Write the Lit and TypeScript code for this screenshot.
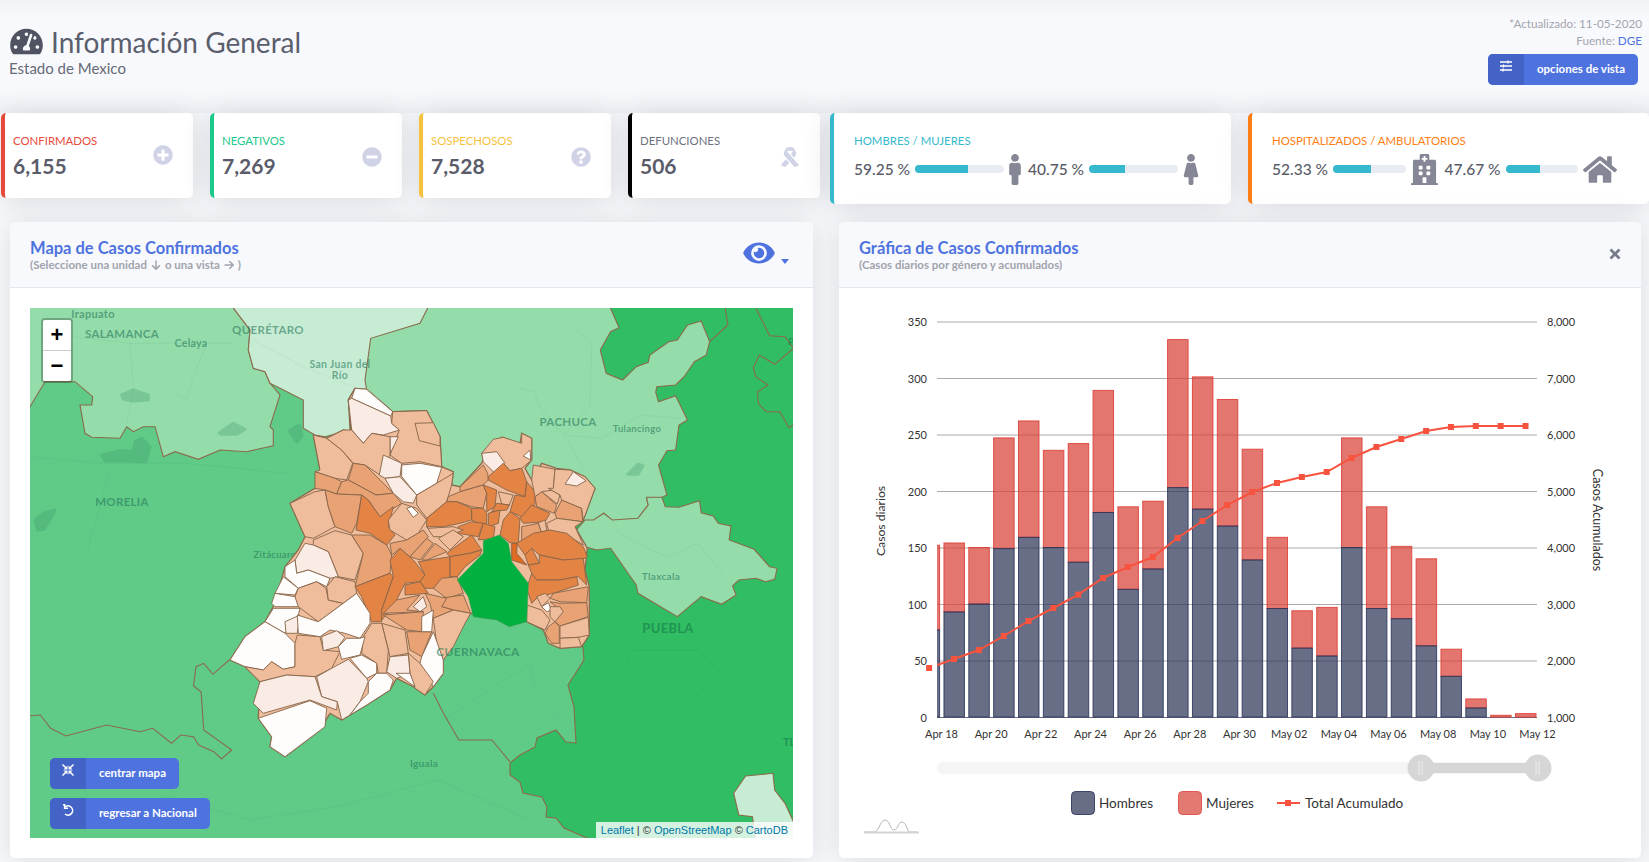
import { LitElement, html, svg, css } from "lit";
import { customElement } from "lit/decorators.js";

// the screenshot was traced in crops, so every shape keeps the crop it was read from
type Frame = [number, number, number, number];
const Z3: Frame = [20, 300, 1 / 3, 1 / 3];
const Z4: Frame = [220, 380, 1 / 3, 1 / 3];
const Z5: Frame = [20, 580, 1 / 1.96, 1 / 3];
const Z9: Frame = [520, 305, 1 / 2.925, 1 / 3];
const Z10: Frame = [520, 500, 1 / 2.925, 1 / 3];
const FULL: Frame = [0, 0, 1, 1];

const at = (f: Frame, pts: string) =>
  pts
    .trim()
    .split(/\s+/)
    .map((p) => {
      const [x, y] = p.split(",").map(Number);
      return `${(f[0] + x * f[2]).toFixed(1)},${(f[1] + y * f[3]).toFixed(1)}`;
    })
    .join(" ");

const W = "#fffdfb";
const P = "#faece4";
const L = "#efbd9b";
const M = "#e8a274";
const D = "#e38445";
const X = "#e06a22";

const OUTLINE =
  "405,25 440,28 518,95 620,92 660,170 665,260 700,275 695,315 720,320 785,250 800,215 845,172 900,190 905,160 935,175 935,240 915,265 935,300 965,250 1010,265 1050,270 1095,290 1125,325 1090,420 1065,440 1102,505 1095,570 1108,620 1108,765 1085,800 1020,805 985,790 970,750 920,725 750,700 700,785 670,840 670,880 640,920 615,945 580,920 530,895 510,930 440,975 390,1005 365,1020 330,1000 300,1050 215,1115 195,1130 150,1100 155,1070 115,1015 120,905 75,860 30,840 75,770 135,725 165,670 195,560 235,510 255,470 210,370 285,325 300,270 280,165 320,175 370,150 395,155 385,60";

const CELLS: [string, string][] = [
  [W, "405,25 440,28 518,95 512,108 395,55"],
  [P, "395,55 512,108 515,130 538,150 490,165 455,160 430,190 395,150 385,60"],
  [L, "518,95 620,92 660,170 665,260 600,245 545,250 510,225 538,150 515,130"],
  [L, "585,130 640,128 660,170 660,198 598,182"],
  [P, "510,170 535,170 510,222"],
  [L, "280,165 320,175 365,210 398,250 380,300 345,295 285,275 300,270"],
  [L, "320,175 370,150 395,150 430,190 455,160 510,170 510,225 480,285 435,255 400,250 365,210"],
  [M, "400,250 435,255 520,340 468,345 385,300"],
  [M, "285,275 345,295 365,305 350,342 315,330 285,325"],
  [M, "365,305 385,300 468,345 520,340 545,370 480,410 445,360 425,345 350,342"],
  [P, "490,225 545,250 540,290 495,295 478,285"],
  [W, "545,255 600,250 665,262 650,310 590,345 545,290"],
  [P, "495,295 540,290 590,345 580,370 550,365 520,340"],
  [L, "210,370 285,335 315,330 325,380 345,440 280,475 255,470"],
  [M, "315,330 350,342 425,345 410,430 395,460 345,440 325,380"],
  [D, "425,345 445,360 480,410 520,380 505,440 525,465 500,495 450,460 408,450"],
  [L, "650,310 700,280 695,315 680,365 620,415 590,375 590,345"],
  [L, "545,370 590,385 620,420 595,460 560,480 510,450 505,420"],
  [W, "560,385 575,380 595,400 580,412"],
  [L, "280,480 345,452 395,465 430,520 405,600 355,590 325,515 280,495"],
  [P, "255,490 280,495 325,515 355,590 330,595 265,570 230,580 225,540"],
  [W, "195,560 225,540 230,580 265,570 330,595 320,620 290,605 235,625 195,590"],
  [W, "190,590 235,625 225,645 165,640"],
  [W, "165,640 225,650 240,680 165,680 155,670"],
  [W, "160,685 240,685 235,705 195,760 135,725"],
  [P, "195,725 240,705 232,760 198,760"],
  [L, "235,625 290,605 318,625 325,660 370,670 295,725 235,680 225,650"],
  [L, "320,620 345,590 405,605 410,640 370,670 325,660"],
  [M, "395,465 450,465 500,495 515,525 510,580 405,620 430,520"],
  [D, "405,620 510,580 520,590 485,690 485,725 455,725 425,650"],
  [D, "510,540 540,505 580,540 615,585 600,605 555,610 520,680 485,720 485,690 520,590"],
  [D, "595,545 690,530 690,590 640,625 615,625 600,605 615,585"],
  [D, "555,615 600,605 625,640 555,645"],
  [L, "785,220 820,178 850,172 905,190 905,160 935,175 935,240 905,265 870,272 850,250 838,290 790,240"],
  [P, "785,220 830,215 855,250 835,290 790,245"],
  [W, "910,228 930,210 932,240"],
  [M, "720,320 790,255 803,280 805,300 790,315 720,335"],
  [D, "805,290 850,250 870,272 905,265 920,305 915,350 860,330 805,300"],
  [D, "920,305 945,335 945,375 905,410 870,395 885,345 915,350"],
  [M, "685,350 720,335 790,315 800,340 790,385 755,380 710,365 680,365"],
  [D, "620,415 680,365 710,365 755,385 755,420 720,430 670,440 620,440"],
  [D, "755,385 790,385 800,400 800,430 785,435 755,420"],
  [D, "790,315 830,330 825,380 800,395 800,340"],
  [L, "835,335 880,345 868,375 845,372"],
  [D, "830,370 868,375 860,390 815,395"],
  [D, "805,400 840,390 835,430 805,440"],
  [D, "755,425 790,430 775,470 715,460 715,440"],
  [D, "790,430 825,440 820,475 775,480"],
  [D, "870,395 900,415 895,490 870,488 840,465 850,420"],
  [D, "935,375 990,400 975,425 910,430 900,415"],
  [M, "945,350 965,335 1010,375 1003,400 950,380"],
  [L, "965,335 985,325 1020,345 1012,372"],
  [M, "1005,400 1025,360 1085,385 1088,425 1010,415"],
  [L, "940,255 1005,268 1000,330 965,335 945,350 935,300"],
  [L, "1005,268 1050,270 1095,290 1125,325 1090,420 1085,385 1025,360 1020,345 985,325 1000,325"],
  [P, "1035,312 1060,275 1098,302 1070,318"],
  [L, "980,430 1010,415 1088,425 1065,440 1090,495 1040,465 985,450"],
  [M, "905,440 955,430 965,460 905,485"],
  [L, "955,428 975,420 980,450 965,460"],
  [D, "890,490 940,460 990,450 1040,460 1090,500 1102,530 1085,540 1030,540 958,525 935,505 915,525"],
  [D, "915,525 935,505 958,550 925,555"],
  [X, "875,490 892,490 890,520 920,555 875,540"],
  [D, "958,525 1030,540 1090,535 1100,615 1075,590 1020,600 950,600 935,580 925,555 958,550"],
  [D, "935,580 950,600 1020,600 1070,590 1075,615 1000,640 955,650 935,670 920,625"],
  [M, "1000,640 1105,620 1100,668 1020,665 990,655"],
  [M, "990,665 1020,670 1100,668 1105,710 1020,738 1005,725 1020,690"],
  [L, "1020,738 1105,712 1108,765 1075,772 1020,775"],
  [L, "1020,775 1075,772 1085,800 1020,805"],
  [M, "985,740 1005,725 1018,740 1018,790 995,790 975,760"],
  [L, "950,650 975,640 990,655 965,680"],
  [W, "965,680 985,668 995,690 980,695"],
  [L, "920,675 965,690 990,720 975,750 920,725"],
  [L, "990,680 1020,680 1030,695 1005,725 990,710"],
  [M, "510,490 560,480 610,450 625,470 570,530 540,505 515,525"],
  [L, "625,445 700,440 730,450 680,470 640,470 620,440"],
  [L, "655,475 700,450 730,470 690,510"],
  [M, "570,530 620,475 640,490 600,540"],
  [M, "605,540 645,490 680,515 620,540"],
  [D, "680,520 755,465 785,510 750,520 690,530"],
  [D, "690,530 750,520 785,510 780,525 735,560 712,590 690,590"],
  [M, "640,625 665,595 712,590 730,640 680,655 660,640"],
  [M, "660,655 730,645 752,700 700,690 665,680"],
  [M, "615,640 680,655 665,680 700,690 640,715 630,670"],
  [M, "490,700 530,660 600,645 560,690 610,695"],
  [M, "490,705 610,695 605,755 560,750"],
  [L, "640,715 700,690 752,700 735,730 700,800 670,840 650,790"],
  [L, "485,730 555,750 565,820 510,830"],
  [L, "430,770 455,730 485,730 505,810 500,880 475,880 470,850 425,820"],
  [M, "560,755 635,755 605,830 570,810"],
  [W, "605,830 640,755 670,840 670,880 640,920 600,850"],
  [L, "565,820 600,850 640,905 615,945 585,925 570,880"],
  [P, "510,830 565,825 570,880 530,895 500,875"],
  [W, "528,880 570,880 585,920"],
  [W, "605,710 640,690 635,755 605,755"],
  [P, "580,680 610,650 620,680 600,695"],
  [W, "30,840 75,770 135,725 195,760 225,790 225,860 190,868 155,845 130,870 75,860"],
  [L, "75,860 130,870 155,845 190,868 225,860 225,790 232,765 300,770 310,810 360,815 335,865 285,890 200,885 120,905"],
  [W, "232,705 295,725 370,670 410,640 450,700 450,730 420,775 375,760 330,750 300,770 235,760"],
  [P, "305,770 350,752 375,772 355,800 310,812"],
  [W, "355,800 380,775 420,775 435,770 420,825 365,838"],
  [W, "390,835 425,825 470,850 470,880 440,895"],
  [P, "290,890 335,865 385,838 440,895 445,905 420,965 390,1005 365,1020 352,965 305,950"],
  [W, "445,905 470,880 500,880 520,900 510,930 440,975 390,1005 420,965 445,940"],
  [P, "120,905 200,885 285,890 305,950 352,965 350,990 270,960 130,1000 100,970"],
  [W, "115,1015 270,962 320,985 315,1040 215,1115 195,1130 150,1100 155,1070"],
];

const STATES: [string, Frame, string][] = [
  [
    "#5fcb87",
    FULL,
    "20,298 350,298 350,440 480,600 575,640 583,647 584,660 568,685 574,707 576,743 566,742 556,730 537,738 535,747 520,755 510,763 510,775 520,782 523,793 542,797 547,807 546,817 556,818 564,828 587,838 600,848 20,848",
  ],
  [
    "#94dcaa",
    Z9,
    "-491,-20 265,-20 265,10 290,68 265,80 235,135 252,205 300,225 340,185 375,172 380,150 435,110 460,105 490,60 530,48 555,110 545,150 510,170 480,215 455,240 400,245 397,262 405,290 455,272 490,345 465,360 455,435 430,437 405,480 430,570 412,578 370,578 375,600 345,640 270,648 245,625 215,647 185,647 0,700 -491,400",
  ],
  [
    "#94dcaa",
    Z10,
    "370,-8 415,-8 425,20 465,22 525,2 530,38 565,48 580,70 617,78 612,120 685,148 730,200 752,205 745,238 718,245 690,235 640,240 622,258 632,285 590,313 530,290 460,350 345,280 340,255 265,145 225,150 195,142 165,90 190,60 215,60 245,40 270,60 345,55 375,15",
  ],
  [
    "#94dcaa",
    Z3,
    "-10,0 632,0 640,24 690,90 685,150 700,205 735,215 750,250 780,285 750,380 760,390 760,437 680,455 600,450 535,478 465,455 430,470 405,380 370,380 340,395 320,380 300,415 215,412 195,400 180,315 215,315 218,290 165,245 75,245 30,320 -10,385",
  ],
  [
    "#c7ecd4",
    Z3,
    "632,0 640,24 690,90 685,150 700,205 735,215 750,250 780,265 850,300 850,385 885,405 915,410 990,390 985,300 1005,265 1040,270 1035,240 1052,115 1200,70 1235,0",
  ],
  ["#c7ecd4", Z10, "660,828 740,820 745,870 775,910 800,965 810,1040 690,1040 680,950 640,945 625,880"],
];

const BORDERS: [Frame, string][] = [
  [Z9, "690,10 730,92 775,95 800,130 745,178 700,150 682,188 690,215 725,240 695,260 697,295 720,320 760,320 787,368 840,330"],
  [Z5, "-5,410 40,405 60,445 90,468 170,435 235,455 260,445 297,490 315,465 340,470 350,495 380,515 395,537 415,510 360,450 355,335 340,318 345,260 360,250 378,283 410,240"],
  [Z5, "810,340 830,400 860,480 925,480 960,545"],
  [Z9, "598,-5 608,60 555,110"],
];

const ROADS: [Frame, string][] = [
  [Z3, "160,110 330,130 470,130 640,130"],
  [Z3, "330,130 340,260 320,370"],
  [Z3, "460,280 500,300 520,230 560,130"],
  [Z3, "700,120 850,200 1000,260"],
  [Z3, "30,470 240,490 500,490 800,520"],
  [Z3, "270,500 240,620 200,760"],
  [Z9, "0,250 40,260 60,310 130,390 240,400 350,330 470,340"],
  [Z9, "150,60 210,120 205,300 130,390 190,500"],
  [Z10, "280,90 340,130 430,170 520,130 600,230"],
  [Z10, "300,510 330,450 520,450 590,520 500,600 330,760"],
  [Z5, "60,700 300,650 450,720 620,680 820,600 1000,720"],
  [Z5, "830,420 900,350 1000,250 1010,330 1060,420"],
];

const LAKES: [Frame, string][] = [
  [Z3, "305,285 340,270 385,285 385,300 340,303 310,298"],
  [Z3, "245,465 300,452 340,455 345,425 365,415 390,440 378,485 300,482 255,483"],
  [Z3, "45,660 70,640 105,630 95,650 72,688 52,690"],
  [Z3, "598,398 640,370 675,388 650,403 602,403"],
  [Z3, "808,392 838,375 846,408 830,426"],
  [Z9, "315,508 345,478 360,482 345,508"],
];

const LABELS: [string, number, number, number][] = [
  ["Irapuato", 93, 318, 11],
  ["SALAMANCA", 122, 338, 11.5],
  ["Celaya", 191, 347, 10.5],
  ["QUERÉTARO", 268, 334, 11.5],
  ["San Juan del", 340, 368, 10.5],
  ["Río", 340, 379, 10.5],
  ["MORELIA", 122, 506, 11.5],
  ["Zitácuaro", 275, 558, 9.5],
  ["PACHUCA", 568, 426, 11.5],
  ["Tulancingo", 637, 432, 9.5],
  ["Tlaxcala", 661, 580, 10],
  ["Iguala", 424, 767, 10],
];

const CDMX = "790,482 838,465 865,490 875,545 925,610 920,725 868,740 830,720 760,710 745,650 712,600 790,520";

// hombres, total por barra
const BARS: [number, number][] = [
  [77, 152], [93, 154], [100, 150], [149, 247], [159, 262], [150, 236], [137, 242], [181, 289], [113, 186],
  [131, 191], [203, 334], [184, 301], [169, 281], [139, 237], [96, 159], [61, 94], [54, 97], [150, 247],
  [96, 186], [87, 151], [63, 140], [36, 60], [8, 16], [0, 1.5], [0, 3],
];
const LINE_Y = [
  668, 659, 650, 636, 621, 608, 594.6, 578, 567, 557, 538, 521, 505, 492, 483, 477, 472, 458, 447, 439, 431, 427, 426, 426, 426,
];
const DATES = ["Apr 18", "Apr 20", "Apr 22", "Apr 24", "Apr 26", "Apr 28", "Apr 30", "May 02", "May 04", "May 06", "May 08", "May 10", "May 12"];
const barX = (i: number) => 929.1 + 24.85 * i;
const valY = (v: number) => 717 - v * 1.13;

const ICONS: Record<string, [string, string]> = {
  plus: ["0 0 512 512", "M256 8C119 8 8 119 8 256s111 248 248 248 248-111 248-248S393 8 256 8zm144 276c0 6.6-5.4 12-12 12h-92v92c0 6.6-5.4 12-12 12h-56c-6.6 0-12-5.4-12-12v-92h-92c-6.6 0-12-5.4-12-12v-56c0-6.6 5.4-12 12-12h92v-92c0-6.6 5.4-12 12-12h56c6.6 0 12 5.4 12 12v92h92c6.6 0 12 5.4 12 12v56z"],
  minus: ["0 0 512 512", "M256 8C119 8 8 119 8 256s111 248 248 248 248-111 248-248S393 8 256 8zM124 296c-6.6 0-12-5.4-12-12v-56c0-6.6 5.4-12 12-12h264c6.6 0 12 5.4 12 12v56c0 6.6-5.4 12-12 12H124z"],
  question: ["0 0 512 512", "M504 256c0 136.997-111.043 248-248 248S8 392.997 8 256C8 119.083 119.043 8 256 8s248 111.083 248 248zM262.655 90c-54.497 0-89.255 22.957-116.549 63.758-3.536 5.286-2.353 12.415 2.715 16.258l34.699 26.31c5.205 3.947 12.621 3.008 16.665-2.122 17.864-22.658 30.113-35.797 57.303-35.797 20.429 0 45.698 13.148 45.698 32.958 0 14.976-12.363 22.667-32.534 33.976C247.128 238.528 216 254.941 216 296v4c0 6.627 5.373 12 12 12h56c6.627 0 12-5.373 12-12v-1.333c0-28.462 83.186-29.647 83.186-106.667 0-58.002-60.165-102-116.531-102zM256 338c-25.365 0-46 20.635-46 46 0 25.364 20.635 46 46 46s46-20.636 46-46c0-25.365-20.635-46-46-46z"],
  ribbon: ["0 0 448 512", "M6.1 444.3c-9.6 10.8-7.5 27.6 4.5 35.7l68.8 27.9c9.9 6.7 23.3 5 31.3-3.8l91.8-101.9-79.2-87.9-117.2 130zm435.8 0s-292-324.6-295.4-330.1c15.4-8.4 40.2-17.9 77.5-17.9s62.1 9.5 77.5 17.9c-3.3 5.6-56.1 64.6-56.1 64.6l79.1 87.7 34.2-38c28.7-31.9 33.3-78.6 11.4-115.5l-43.7-73.5c-4.3-7.2-9.9-13.3-16.8-18-40.7-27.6-127.4-29.7-171.4 0-6.9 4.7-12.5 10.8-16.8 18l-43.6 73.2c-1.5 2.5-37.1 62.2 11.5 116L337.5 504c8 8.9 21.4 10.5 31.3 3.8l68.8-27.9c11.9-8 14-24.8 4.3-35.6z"],
  male: ["0 0 192 512", "M96 0c35.346 0 64 28.654 64 64s-28.654 64-64 64-64-28.654-64-64S60.654 0 96 0m48 144h-11.36c-22.711 10.443-49.59 10.894-73.28 0H48c-26.51 0-48 21.49-48 48v136c0 13.255 10.745 24 24 24h16v136c0 13.255 10.745 24 24 24h64c13.255 0 24-10.745 24-24V352h16c13.255 0 24-10.745 24-24V192c0-26.51-21.49-48-48-48z"],
  female: ["0 0 256 512", "M128 0c35.346 0 64 28.654 64 64s-28.654 64-64 64c-35.346 0-64-28.654-64-64S92.654 0 128 0m119.283 354.179l-48-192A24 24 0 0 0 176 144h-11.36c-22.711 10.443-49.59 10.894-73.28 0H80a24 24 0 0 0-23.283 18.179l-48 192C4.935 369.305 16.383 384 32 384h56v104c0 13.255 10.745 24 24 24h32c13.255 0 24-10.745 24-24V384h56c15.591 0 27.071-14.671 23.283-29.821z"],
  hospital: ["0 0 448 512", "M448 492v20H0v-20c0-6.627 5.373-12 12-12h20V120c0-13.255 10.745-24 24-24h88V24c0-13.255 10.745-24 24-24h112c13.255 0 24 10.745 24 24v72h88c13.255 0 24 10.745 24 24v360h20c6.627 0 12 5.373 12 12zM308 192h-40c-6.627 0-12 5.373-12 12v40c0 6.627 5.373 12 12 12h40c6.627 0 12-5.373 12-12v-40c0-6.627-5.373-12-12-12zm-168 64h40c6.627 0 12-5.373 12-12v-40c0-6.627-5.373-12-12-12h-40c-6.627 0-12 5.373-12 12v40c0 6.627 5.373 12 12 12zm104 128h-40c-6.627 0-12 5.373-12 12v84h64v-84c0-6.627-5.373-12-12-12zm64-96h-40c-6.627 0-12 5.373-12 12v40c0 6.627 5.373 12 12 12h40c6.627 0 12-5.373 12-12v-40c0-6.627-5.373-12-12-12zm-116 12c0-6.627-5.373-12-12-12h-40c-6.627 0-12 5.373-12 12v40c0 6.627 5.373 12 12 12h40c6.627 0 12-5.373 12-12v-40zM182 96h26v26a6 6 0 0 0 6 6h20a6 6 0 0 0 6-6V96h26a6 6 0 0 0 6-6V70a6 6 0 0 0-6-6h-26V38a6 6 0 0 0-6-6h-20a6 6 0 0 0-6 6v26h-26a6 6 0 0 0-6 6v20a6 6 0 0 0 6 6z"],
  home: ["0 0 576 512", "M280.37 148.26L96 300.11V464a16 16 0 0 0 16 16l112.06-.29a16 16 0 0 0 15.92-16V368a16 16 0 0 1 16-16h64a16 16 0 0 1 16 16v95.64a16 16 0 0 0 16 16.05L464 480a16 16 0 0 0 16-16V300L295.67 148.26a12.19 12.19 0 0 0-15.3 0zM571.6 251.47L488 182.56V44.05a12 12 0 0 0-12-12h-56a12 12 0 0 0-12 12v72.61L318.47 43a48 48 0 0 0-61 0L4.34 251.47a12 12 0 0 0-1.6 16.9l25.5 31A12 12 0 0 0 45.15 301l235.22-193.74a12.19 12.19 0 0 1 15.3 0L530.9 301a12 12 0 0 0 16.9-1.6l25.5-31a12 12 0 0 0-1.7-16.93z"],
  gauge: ["0 0 576 512", "M288 32C128.94 32 0 160.94 0 320c0 52.8 14.25 102.26 39.06 144.8 5.61 9.62 16.3 15.2 27.44 15.2h443c11.14 0 21.83-5.58 27.44-15.2C561.75 422.26 576 372.8 576 320c0-159.06-128.94-288-288-288zm0 64c14.71 0 26.58 10.13 30.32 23.65-1.11 2.26-2.64 4.23-3.45 6.67l-9.22 27.67c-5.13 3.49-10.97 6.01-17.64 6.01-17.67 0-32-14.33-32-32S270.33 96 288 96zM96 384c-17.67 0-32-14.33-32-32s14.33-32 32-32 32 14.33 32 32-14.33 32-32 32zm48-160c-17.67 0-32-14.33-32-32s14.33-32 32-32 32 14.33 32 32-14.33 32-32 32zm246.77-72.41l-61.33 184C343.13 347.33 352 364.54 352 384c0 11.72-3.38 22.55-8.88 32H232.88c-5.5-9.45-8.88-20.28-8.88-32 0-33.94 26.5-61.43 59.9-63.59l61.34-184.01c4.17-12.56 17.73-19.45 30.36-15.17 12.57 4.19 19.35 17.79 15.17 30.36zm14.66 57.2l15.52-46.55c3.47-1.29 7.13-2.23 11.05-2.23 17.67 0 32 14.33 32 32s-14.33 32-32 32c-11.38-.01-20.89-6.28-26.57-15.22zM480 384c-17.67 0-32-14.33-32-32s14.33-32 32-32 32 14.33 32 32-14.33 32-32 32z"],
  eye: ["0 0 576 512", "M572.52 241.4C518.29 135.59 410.93 64 288 64S57.68 135.64 3.48 241.41a32.35 32.35 0 0 0 0 29.19C57.71 376.41 165.07 448 288 448s230.32-71.64 284.52-177.41a32.35 32.35 0 0 0 0-29.19zM288 400a144 144 0 1 1 144-144 143.93 143.93 0 0 1-144 144zm0-240a95.31 95.31 0 0 0-25.31 3.79 47.85 47.85 0 0 1-66.9 66.9A95.78 95.78 0 1 0 288 160z"],
};

const icon = (name: string, cls: string) => html`<svg class=${cls} viewBox=${ICONS[name][0]}><path d=${ICONS[name][1]} fill="currentColor"></path></svg>`;

const slidersIcon = html`<svg class="btn-ico" viewBox="0 0 12 12">
  <path d="M0 2h12M0 6h12M0 10h12M8 .5v3M3.500 4.500v3M3 8.500v3" stroke="#fff" stroke-width="1.300" fill="none"></path>
</svg>`;
const compressIcon = html`<svg class="btn-ico" viewBox="0 0 12 12">
  <path d="M.5 .5L4.500 4.500M11.500 .5L7.500 4.500M.5 11.500L4.500 7.500M11.500 11.500L7.500 7.500" stroke="#fff" stroke-width="1.500"></path>
  <path d="M1.500 5.500h4v-4zM10.500 5.500h-4v-4zM1.500 6.500h4v4zM10.500 6.500h-4v4z" fill="#fff"></path>
</svg>`;
const undoIcon = html`<svg class="btn-ico" viewBox="0 0 12 12">
  <path d="M2.800 3.200A4.600 4.600 0 1 1 3 10" stroke="#fff" stroke-width="1.600" fill="none"></path>
  <path d="M1 .8h1.600v3.400h3.400" stroke="#fff" stroke-width="1.500" fill="none"></path>
</svg>`;
const arrowDown = html`<svg class="arrow" viewBox="0 0 10 10"><path d="M5 .5v8.500M1.200 5.400L5 9.200l3.800-3.800" fill="none" stroke="currentColor" stroke-width="1.500"></path></svg>`;
const arrowRight = html`<svg class="arrow" viewBox="0 0 10 10"><path d="M.5 5h8.500M5.400 1.200L9.200 5 5.400 8.800" fill="none" stroke="currentColor" stroke-width="1.500"></path></svg>`;

@customElement("app-root")
export class AppRoot extends LitElement {
  static styles = css`
    :host {
      display: block;
      width: 1649px;
      height: 862px;
      overflow: hidden;
      background: #f8f9fc;
      font-family: "Lato", "Open Sans", sans-serif;
      color: #5a5c69;
    }
    .head {
      height: 113px;
      box-sizing: border-box;
      padding: 27px 7px 0 9px;
      display: flex;
      justify-content: space-between;
      align-items: flex-start;
      background: linear-gradient(#f2f3f7, #f8f9fc 18px, #f8f9fc 90px, #f1f2f6);
    }
    .title {
      display: flex;
      align-items: center;
      gap: 8px;
      font-size: 28px;
      font-weight: 400;
      line-height: 28px;
      padding-left: 1px;
      color: #5b5e6c;
    }
    .gauge {
      width: 33px;
      height: 29px;
      color: #505362;
    }
    .sub {
      font-size: 15px;
      line-height: 20px;
      margin-top: 2px;
      color: #666977;
    }
    .meta {
      margin-top: -12px;
      display: flex;
      flex-direction: column;
      align-items: flex-end;
      font-size: 11.700px;
      line-height: 17px;
      color: #a3a5ae;
    }
    .meta b {
      font-weight: 400;
      color: #4e73df;
    }
    .meta .btn {
      margin: 5px 4px 0 0;
    }
    .btn {
      display: flex;
      align-items: stretch;
      height: 31px;
      border-radius: 5px;
      overflow: hidden;
      background: #4e73df;
      color: #fff;
      font-size: 11.500px;
      font-weight: 700;
      line-height: 30px;
    }
    .btn i {
      width: 36px;
      display: flex;
      justify-content: center;
      padding-top: 6px;
      box-sizing: border-box;
      background: #4463c6;
    }
    .btn span {
      padding: 0 13px;
    }
    .btn-ico {
      width: 12px;
      height: 12px;
    }
    .stats {
      display: flex;
      align-items: flex-start;
      gap: 17px;
      padding-left: 1px;
      height: 109px;
    }
    .card {
      flex: none;
      box-sizing: border-box;
      background: #fff;
      border-radius: 5px;
      border-left: 4px solid;
      box-shadow: 0 2px 28px rgba(58, 59, 69, 0.16);
    }
    .small {
      width: 192px;
      height: 85px;
      padding: 21px 0 0 8px;
      display: flex;
      justify-content: space-between;
    }
    .wide {
      width: 401px;
      height: 91px;
      padding: 21px 32px 0 20px;
    }
    .wide.first {
      margin-left: -7px;
    }
    .label {
      font-size: 11.400px;
      line-height: 14px;
    }
    .value {
      font-size: 21px;
      font-weight: 700;
      line-height: 26px;
      margin-top: 5px;
      color: #5a5c69;
    }
    .stat-ico {
      width: 20px;
      height: 20px;
      margin: 13px 20px 0 0;
      color: #d0d3e6;
    }
    .small:first-child .stat-ico {
      margin-top: 11px;
    }
    .shares {
      display: flex;
      align-items: center;
      margin-top: 5px;
      height: 32px;
    }
    .pct {
      font-size: 15.500px;
      font-weight: 500;
      width: 61px;
      flex: none;
      white-space: nowrap;
    }
    .bar {
      flex: 1;
      height: 8px;
      border-radius: 4px;
      overflow: hidden;
      background: #eaecf4;
    }
    .bar div {
      height: 100%;
      background: #36b9cc;
    }
    .share-ico {
      flex: none;
      height: 31px;
      margin: 0 7px 0 5px;
      color: #858796;
    }
    .share-ico:last-child {
      margin-right: 0;
    }
    .i-male {
      width: 12px;
    }
    .i-female {
      width: 16px;
    }
    .i-hospital {
      width: 27px;
    }
    .i-home {
      width: 34px;
    }
    .panels {
      display: flex;
      gap: 26px;
      padding-left: 10px;
    }
    .panel {
      flex: none;
      height: 636px;
      box-sizing: border-box;
      background: #fff;
      border-radius: 5px;
      overflow: hidden;
      box-shadow: 0 2px 28px rgba(58, 59, 69, 0.15);
      display: flex;
      flex-direction: column;
    }
    .p-map {
      width: 803px;
    }
    .p-chart {
      width: 802px;
    }
    .p-head {
      height: 66px;
      flex: none;
      box-sizing: border-box;
      padding: 17px 20px 0;
      background: #f8f9fc;
      border-bottom: 1px solid #e3e6f0;
      display: flex;
      justify-content: space-between;
    }
    .p-title {
      font-size: 16.500px;
      font-weight: 700;
      line-height: 18px;
      color: #4e73df;
    }
    .p-sub {
      display: flex;
      align-items: center;
      font-size: 11.500px;
      font-weight: 700;
      line-height: 14px;
      margin-top: 1px;
      white-space: pre;
      color: #a1a3ad;
    }
    .arrow {
      width: 10px;
      height: 10px;
      margin: 0 4px;
    }
    .eye {
      display: flex;
      align-items: flex-end;
      gap: 5px;
      color: #4e73df;
      height: 30px;
      padding: 0 4px 0 0;
    }
    .eye svg {
      width: 34px;
      height: 28px;
      margin-bottom: 2px;
    }
    .eye i {
      width: 0;
      height: 0;
      margin-bottom: 5px;
      border: 4px solid transparent;
      border-top: 5px solid #4e73df;
      border-bottom: 0;
    }
    .close {
      width: 12px;
      height: 12px;
      margin: 9px 0 0 0;
    }
    .map-wrap {
      position: relative;
      margin: 20px 20px 0;
      width: 763px;
      height: 530px;
      overflow: hidden;
      background: #30bd63;
    }
    .map-wrap > svg,
    .chart {
      display: block;
      width: 100%;
      height: 100%;
    }
    .zoom {
      position: absolute;
      left: 11px;
      top: 10px;
      width: 32px;
      border: 2px solid rgba(0, 0, 0, 0.25);
      border-radius: 4px;
      background-clip: padding-box;
      font: 700 22px/30px "Liberation Sans", sans-serif;
      color: #000;
      text-align: center;
      box-sizing: border-box;
    }
    .zoom div {
      height: 30px;
      background: #fff;
    }
    .zoom div:first-child {
      border-bottom: 1px solid #ccc;
      border-radius: 2px 2px 0 0;
    }
    .zoom div:last-child {
      border-radius: 0 0 2px 2px;
    }
    .map-btns {
      position: absolute;
      left: 20px;
      bottom: 9px;
      display: flex;
      flex-direction: column;
      align-items: flex-start;
      gap: 9px;
    }
    .attr {
      position: absolute;
      right: 0;
      bottom: 0;
      height: 16px;
      padding: 0 5px;
      background: rgba(255, 255, 255, 0.8);
      font: 11px/16px "Liberation Sans", sans-serif;
      color: #333;
    }
    .attr b {
      font-weight: 400;
      color: #0078a8;
    }
    .chart-body {
      flex: 1;
      min-height: 0;
    }
    text {
      font-family: "Lato", "Open Sans", sans-serif;
    }
  `;

  renderMap() {
    return html`<svg viewBox="30 308 763 530" preserveAspectRatio="none">
      <rect x="20" y="298" width="790" height="560" fill="#30bd63"></rect>
      ${STATES.map(([fill, f, pts]) => svg`<polygon points=${at(f, pts)} fill=${fill} stroke="#8a6b4c" stroke-width="1.100"></polygon>`)}
      ${BORDERS.map(([f, pts]) => svg`<polyline points=${at(f, pts)} fill="none" stroke="#8a6b4c" stroke-width="1.100"></polyline>`)}
      ${ROADS.map(([f, pts]) => svg`<polyline points=${at(f, pts)} fill="none" stroke="rgba(40,110,80,.07)" stroke-width="1"></polyline>`)}
      ${LAKES.map(([f, pts]) => svg`<polygon points=${at(f, pts)} fill="#3c9669" stroke="#3c9669" stroke-width="3" stroke-linejoin="round" opacity=".3"></polygon>`)}
      ${LABELS.map(
        ([t, x, y, size]) =>
          svg`<text x=${x} y=${y} text-anchor="middle" font-size=${size} font-weight="700" letter-spacing=".3" fill="rgba(40,120,90,.6)">${t}</text>`
      )}
      <text x="668" y="633" text-anchor="middle" font-size="13" font-weight="700" letter-spacing=".3" fill="rgba(20,120,70,.6)">PUEBLA</text>
      <text x="788" y="345" font-size="10" font-weight="700" fill="rgba(20,120,70,.6)">Po</text>
      <text x="783" y="746" font-size="11" font-weight="700" fill="rgba(20,120,70,.6)">TL</text>
      <polygon points=${at(Z4, OUTLINE)} fill=${L} stroke="#8a6b4c" stroke-width="1.300"></polygon>
      ${CELLS.map(([fill, pts]) => svg`<polygon points=${at(Z4, pts)} fill=${fill} stroke="#86644a" stroke-width=".9" stroke-linejoin="round"></polygon>`)}
      <polygon points=${at(Z4, CDMX)} fill="#00b140" stroke="#3f9a55" stroke-width=".6"></polygon>
      <text x="478" y="656" text-anchor="middle" font-size="12" font-weight="700" letter-spacing=".3" fill="rgba(40,120,90,.6)">CUERNAVACA</text>
    </svg>`;
  }

  renderChart() {
    const grid = [350, 300, 250, 200, 150, 100, 50, 0];
    const line = LINE_Y.map((y, i) => `${barX(i)},${y}`).join(" ");
    return html`<svg class="chart" viewBox="839 288 802 570" preserveAspectRatio="none">
      <defs>
        <clipPath id="plot"><rect x="937" y="300" width="600" height="420"></rect></clipPath>
      </defs>
      ${grid.map((v, i) => {
        const y = valY(v) + 0.5;
        return svg`
          <line x1="937" x2="1537" y1=${y} y2=${y} stroke=${v === 0 ? "#666a80" : "#aaa"} stroke-width="1"></line>
          <text x="927" y=${y + 4} text-anchor="end" font-size="11" fill="#333">${v}</text>
          <text x="1547" y=${y + 4} font-size="11" fill="#333">${(8 - i).toString()},000</text>`;
      })}
      <g clip-path="url(#plot)">
        ${BARS.map(([m, t], i) => {
          const x = barX(i) - 10;
          return svg`
            <rect x=${x} y=${valY(t)} width="20.500" height=${valY(m) - valY(t)} fill="rgba(216,66,56,.72)" stroke="rgba(221,60,52,.85)" stroke-width="1"></rect>
            ${m ? svg`<rect x=${x} y=${valY(m)} width="20.500" height=${717 - valY(m)} fill="rgba(47,56,88,.73)" stroke="rgba(43,52,90,.85)" stroke-width="1"></rect>` : ""}`;
        })}
        <polyline points=${line} fill="none" stroke="#f7533f" stroke-width="2"></polyline>
      </g>
      ${LINE_Y.map((y, i) => svg`<rect x=${barX(i) - 3} y=${y - 3} width="6" height="6" fill="#f7533f"></rect>`)}
      ${DATES.map((d, i) => svg`<text x=${941.5 + i * 49.67} y="738" text-anchor="middle" font-size="11" fill="#333">${d}</text>`)}
      <text transform="translate(885 521) rotate(-90)" text-anchor="middle" font-size="12.200" fill="#333">Casos diarios</text>
      <text transform="translate(1593 520) rotate(90)" text-anchor="middle" font-size="12.500" fill="#333">Casos Acumulados</text>

      <rect x="937" y="762" width="600" height="12" rx="6" fill="#f5f5f5"></rect>
      <rect x="1421" y="763" width="117" height="10" fill="#d6d6d6"></rect>
      ${[1421, 1538].map(
        (cx) => svg`<ellipse cx=${cx} cy="768" rx="13.500" ry="13.500" fill="#d6d6d6"></ellipse>
          <path d="M${cx - 2} 761v14M${cx + 1} 761v14" stroke="#eee" stroke-width="1"></path>`
      )}

      <rect x="1071.500" y="791.500" width="23" height="23" rx="4" fill="#676d84" stroke="#3c4468"></rect>
      <text x="1099" y="808" font-size="13.500" fill="#333">Hombres</text>
      <rect x="1178.500" y="791.500" width="23" height="23" rx="4" fill="#e27a72" stroke="#e25750"></rect>
      <text x="1206" y="808" font-size="13.500" fill="#333">Mujeres</text>
      <path d="M1277 803h23" stroke="#f7533f" stroke-width="2"></path>
      <rect x="1285" y="800" width="6" height="6" fill="#f7533f"></rect>
      <text x="1305" y="808" font-size="13.500" fill="#333">Total Acumulado</text>

      <path d="M864 832h10c5 0 6-12 11-12s5 10 9 10 4-8 8-8 5 8 7 10h8" fill="none" stroke="#b5b5b5" stroke-width="1"></path>
      <path d="M864 832.500h55" stroke="#d4d4d4" stroke-width="2"></path>
    </svg>`;
  }

  render() {
    return html`
      <header class="head">
        <div>
          <div class="title">${icon("gauge", "gauge")}Información General</div>
          <div class="sub">Estado de Mexico</div>
        </div>
        <div class="meta">
          <span>*Actualizado: 11-05-2020</span>
          <span>Fuente: <b>DGE</b></span>
          <div class="btn"><i>${slidersIcon}</i><span>opciones de vista</span></div>
        </div>
      </header>

      <section class="stats">
        ${[
          ["CONFIRMADOS", "6,155", "#e74a3b", "plus"],
          ["NEGATIVOS", "7,269", "#1cc88a", "minus"],
          ["SOSPECHOSOS", "7,528", "#f6c23e", "question"],
          ["DEFUNCIONES", "506", "#000", "ribbon"],
        ].map(
          ([label, value, color, ico]) => html`<div class="card small" style="border-color:${color}">
            <div>
              <div class="label" style="color:${color === "#000" ? "#6e707e" : color}">${label}</div>
              <div class="value">${value}</div>
            </div>
            ${icon(ico, "stat-ico")}
          </div>`
        )}
        <div class="card wide first" style="border-color:#36b9cc">
          <div class="label" style="color:#36b9cc">HOMBRES / MUJERES</div>
          <div class="shares">
            <span class="pct">59.25 %</span>
            <div class="bar"><div style="width:59.25%"></div></div>
            ${icon("male", "share-ico i-male")}
            <span class="pct">40.75 %</span>
            <div class="bar"><div style="width:40.75%"></div></div>
            ${icon("female", "share-ico i-female")}
          </div>
        </div>
        <div class="card wide" style="border-color:#fd7e14">
          <div class="label" style="color:#fd7e14">HOSPITALIZADOS / AMBULATORIOS</div>
          <div class="shares">
            <span class="pct">52.33 %</span>
            <div class="bar"><div style="width:52.33%"></div></div>
            ${icon("hospital", "share-ico i-hospital")}
            <span class="pct">47.67 %</span>
            <div class="bar"><div style="width:47.67%"></div></div>
            ${icon("home", "share-ico i-home")}
          </div>
        </div>
      </section>

      <section class="panels">
        <div class="panel p-map">
          <div class="p-head">
            <div>
              <div class="p-title">Mapa de Casos Confirmados</div>
              <div class="p-sub">(Seleccione una unidad${arrowDown}o una vista${arrowRight})</div>
            </div>
            <div class="eye">${icon("eye", "")}<i></i></div>
          </div>
          <div class="map-wrap">
            ${this.renderMap()}
            <div class="zoom"><div>+</div><div>−</div></div>
            <div class="map-btns">
              <div class="btn"><i>${compressIcon}</i><span>centrar mapa</span></div>
              <div class="btn"><i>${undoIcon}</i><span>regresar a Nacional</span></div>
            </div>
            <div class="attr"><b>Leaflet</b> | © <b>OpenStreetMap</b> © <b>CartoDB</b></div>
          </div>
        </div>
        <div class="panel p-chart">
          <div class="p-head">
            <div>
              <div class="p-title">Gráfica de Casos Confirmados</div>
              <div class="p-sub">(Casos diarios por género y acumulados)</div>
            </div>
            <svg class="close" viewBox="0 0 12 12">
              <path d="M1.500 1.500l9 9M10.500 1.500l-9 9" stroke="#777c8a" stroke-width="2.800"></path>
            </svg>
          </div>
          <div class="chart-body">${this.renderChart()}</div>
        </div>
      </section>
    `;
  }
}
